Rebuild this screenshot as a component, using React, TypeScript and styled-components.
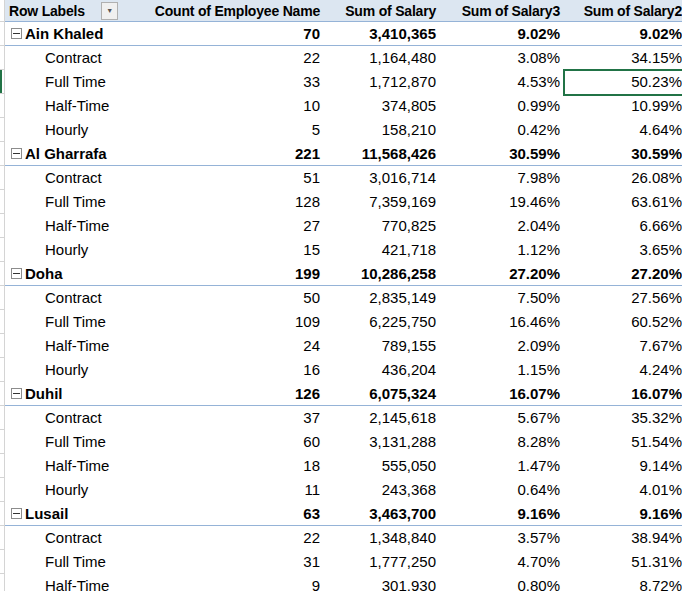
import React from 'react';
import styled, { createGlobalStyle } from 'styled-components';

const Global = createGlobalStyle`
  body { margin: 0; background: #fff; font-family: 'Liberation Sans', Arial, sans-serif; }
`;

const Sheet = styled.div`
  width: 682px;
  height: 591px;
  overflow: hidden;
  position: relative;
`;

const Grid = styled.div`
  display: grid;
  grid-template-columns: 5px 117px 202px 116px 124px 122px;
  grid-template-rows: 22px;
  grid-auto-rows: 24px;
  font-size: 15px;
  color: #000;
`;

const Strip = styled.div<{ $active?: boolean }>`
  border-right: 1px solid #d4d4d4;
  border-bottom: 1px solid #d4d4d4;
  box-shadow: ${({ $active }) => ($active ? 'inset 2px 0 0 #217346' : 'none')};
`;

const Head = styled.div<{ $right?: boolean }>`
  background: #dce6f1;
  border-bottom: 1px solid #95b3d7;
  font-weight: bold;
  font-size: 14px;
  letter-spacing: -0.2px;
  display: flex;
  align-items: center;
  justify-content: ${({ $right }) => ($right ? 'flex-end' : 'flex-start')};
  padding: 0 4px;
  white-space: nowrap;
  height: 22px;
  box-sizing: border-box;
`;

const Filter = styled.span`
  margin-left: auto;
  width: 15px;
  height: 16px;
  border: 1px solid #b0b0b0;
  background: #f0f0f0;
  display: flex;
  align-items: center;
  justify-content: center;
  font-size: 7px;
  color: #555;
`;

const Cell = styled.div<{ $bold?: boolean; $right?: boolean; $indent?: boolean; $group?: boolean }>`
  display: flex;
  align-items: center;
  justify-content: ${({ $right }) => ($right ? 'flex-end' : 'flex-start')};
  padding: ${({ $indent }) => ($indent ? '0 4px 0 40px' : '0 4px')};
  font-weight: ${({ $bold }) => ($bold ? 'bold' : 'normal')};
  border-bottom: 1px solid ${({ $group }) => ($group ? '#95b3d7' : 'transparent')};
  white-space: nowrap;
`;

const Toggle = styled.span`
  width: 9px;
  height: 9px;
  border: 1px solid #8c8c8c;
  margin: 0 3px 0 2px;
  position: relative;
  &::after {
    content: '';
    position: absolute;
    left: 1px;
    right: 1px;
    top: 4px;
    height: 1px;
    background: #333;
  }
`;

const Selected = styled.div`
  position: absolute;
  left: 563px;
  top: 69px;
  width: 130px;
  height: 23px;
  border: 2px solid #217346;
`;

const groups = [
  { name: 'Ain Khaled', c: '70', s: '3,410,365', p3: '9.02%', p2: '9.02%', rows: [
    ['Contract', '22', '1,164,480', '3.08%', '34.15%'],
    ['Full Time', '33', '1,712,870', '4.53%', '50.23%'],
    ['Half-Time', '10', '374,805', '0.99%', '10.99%'],
    ['Hourly', '5', '158,210', '0.42%', '4.64%'],
  ] },
  { name: 'Al Gharrafa', c: '221', s: '11,568,426', p3: '30.59%', p2: '30.59%', rows: [
    ['Contract', '51', '3,016,714', '7.98%', '26.08%'],
    ['Full Time', '128', '7,359,169', '19.46%', '63.61%'],
    ['Half-Time', '27', '770,825', '2.04%', '6.66%'],
    ['Hourly', '15', '421,718', '1.12%', '3.65%'],
  ] },
  { name: 'Doha', c: '199', s: '10,286,258', p3: '27.20%', p2: '27.20%', rows: [
    ['Contract', '50', '2,835,149', '7.50%', '27.56%'],
    ['Full Time', '109', '6,225,750', '16.46%', '60.52%'],
    ['Half-Time', '24', '789,155', '2.09%', '7.67%'],
    ['Hourly', '16', '436,204', '1.15%', '4.24%'],
  ] },
  { name: 'Duhil', c: '126', s: '6,075,324', p3: '16.07%', p2: '16.07%', rows: [
    ['Contract', '37', '2,145,618', '5.67%', '35.32%'],
    ['Full Time', '60', '3,131,288', '8.28%', '51.54%'],
    ['Half-Time', '18', '555,050', '1.47%', '9.14%'],
    ['Hourly', '11', '243,368', '0.64%', '4.01%'],
  ] },
  { name: 'Lusail', c: '63', s: '3,463,700', p3: '9.16%', p2: '9.16%', rows: [
    ['Contract', '22', '1,348,840', '3.57%', '38.94%'],
    ['Full Time', '31', '1,777,250', '4.70%', '51.31%'],
    ['Half-Time', '9', '301,930', '0.80%', '8.72%'],
  ] },
];

export default function App() {
  let rowIndex = 0;
  return (
    <Sheet>
      <Global />
      <Grid>
        <Strip />
        <Head>Row Labels<Filter>▼</Filter></Head>
        <Head $right>Count of Employee Name</Head>
        <Head $right>Sum of Salary</Head>
        <Head $right>Sum of Salary3</Head>
        <Head $right>Sum of Salary2</Head>
        {groups.map((g) => {
          rowIndex++;
          return (
            <React.Fragment key={g.name}>
              <Strip />
              <Cell $bold $group><Toggle />{g.name}</Cell>
              <Cell $bold $right $group>{g.c}</Cell>
              <Cell $bold $right $group>{g.s}</Cell>
              <Cell $bold $right $group>{g.p3}</Cell>
              <Cell $bold $right $group>{g.p2}</Cell>
              {g.rows.map((r) => {
                rowIndex++;
                const active = rowIndex === 3;
                return (
                  <React.Fragment key={g.name + r[0]}>
                    <Strip $active={active} />
                    <Cell $indent>{r[0]}</Cell>
                    <Cell $right>{r[1]}</Cell>
                    <Cell $right>{r[2]}</Cell>
                    <Cell $right>{r[3]}</Cell>
                    <Cell $right>{r[4]}</Cell>
                  </React.Fragment>
                );
              })}
            </React.Fragment>
          );
        })}
      </Grid>
      <Selected />
    </Sheet>
  );
}
